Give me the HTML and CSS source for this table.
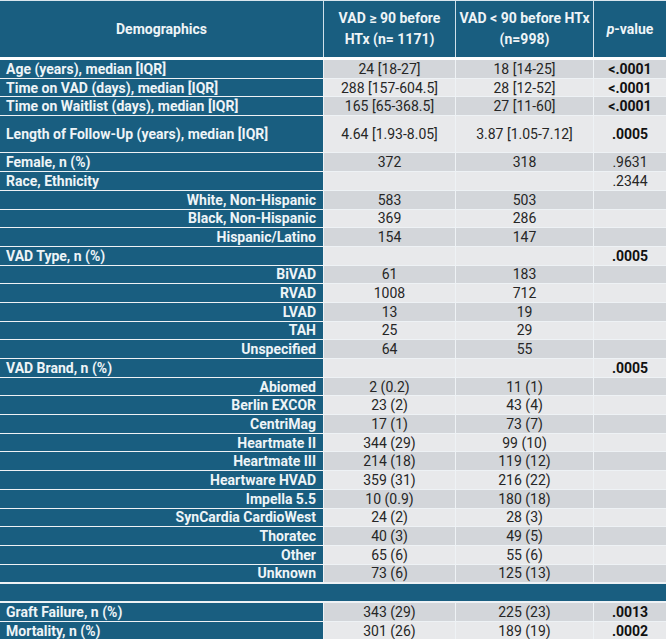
FILE: index.html
```html
<!DOCTYPE html>
<html>
<head>
<meta charset="utf-8">
<link rel="stylesheet" href="styles.css">
</head>
<body>
<div class="sheet">
  <div class="grid head">
    <div class="hc">Demographics</div>
    <div class="hc">VAD ≥ 90 before<br>HTx (n= 1171)</div>
    <div class="hc">VAD &lt; 90 before HTx<br>(n=998)</div>
    <div class="hc"><i>p</i>-value</div>
  </div>
  <div class="grid body">
    <div class="lab">Age (years), median [IQR]</div><div class="d g1">24 [18-27]</div><div class="d g1">18 [14-25]</div><div class="d g1 b">&lt;.0001</div>
    <div class="lab">Time on VAD (days), median [IQR]</div><div class="d g2">288 [157-604.5]</div><div class="d g2">28 [12-52]</div><div class="d g2 b">&lt;.0001</div>
    <div class="lab">Time on Waitlist (days), median [IQR]</div><div class="d g1">165 [65-368.5]</div><div class="d g1">27 [11-60]</div><div class="d g1 b">&lt;.0001</div>
    <div class="lab tall">Length of Follow-Up (years), median [IQR]</div><div class="d g2 tall">4.64 [1.93-8.05]</div><div class="d g2 tall">3.87 [1.05-7.12]</div><div class="d g2 b tall">.0005</div>
    <div class="lab">Female, n (%)</div><div class="d g1">372</div><div class="d g1">318</div><div class="d g1">.9631</div>
    <div class="lab">Race, Ethnicity</div><div class="d g2"></div><div class="d g2"></div><div class="d g2">.2344</div>
    <div class="lab sub">White, Non-Hispanic</div><div class="d g1">583</div><div class="d g1">503</div><div class="d g1"></div>
    <div class="lab sub">Black, Non-Hispanic</div><div class="d g2">369</div><div class="d g2">286</div><div class="d g2"></div>
    <div class="lab sub">Hispanic/Latino</div><div class="d g1">154</div><div class="d g1">147</div><div class="d g1"></div>
    <div class="lab">VAD Type, n (%)</div><div class="d g2"></div><div class="d g2"></div><div class="d g2 b">.0005</div>
    <div class="lab sub">BiVAD</div><div class="d g1">61</div><div class="d g1">183</div><div class="d g1"></div>
    <div class="lab sub">RVAD</div><div class="d g2">1008</div><div class="d g2">712</div><div class="d g2"></div>
    <div class="lab sub">LVAD</div><div class="d g1">13</div><div class="d g1">19</div><div class="d g1"></div>
    <div class="lab sub">TAH</div><div class="d g2">25</div><div class="d g2">29</div><div class="d g2"></div>
    <div class="lab sub">Unspecified</div><div class="d g1">64</div><div class="d g1">55</div><div class="d g1"></div>
    <div class="lab">VAD Brand, n (%)</div><div class="d g2"></div><div class="d g2"></div><div class="d g2 b">.0005</div>
    <div class="lab sub">Abiomed</div><div class="d g1">2 (0.2)</div><div class="d g1">11 (1)</div><div class="d g1"></div>
    <div class="lab sub">Berlin EXCOR</div><div class="d g2">23 (2)</div><div class="d g2">43 (4)</div><div class="d g2"></div>
    <div class="lab sub">CentriMag</div><div class="d g1">17 (1)</div><div class="d g1">73 (7)</div><div class="d g1"></div>
    <div class="lab sub">Heartmate II</div><div class="d g2">344 (29)</div><div class="d g2">99 (10)</div><div class="d g2"></div>
    <div class="lab sub">Heartmate III</div><div class="d g1">214 (18)</div><div class="d g1">119 (12)</div><div class="d g1"></div>
    <div class="lab sub">Heartware HVAD</div><div class="d g2">359 (31)</div><div class="d g2">216 (22)</div><div class="d g2"></div>
    <div class="lab sub">Impella 5.5</div><div class="d g1">10 (0.9)</div><div class="d g1">180 (18)</div><div class="d g1"></div>
    <div class="lab sub">SynCardia CardioWest</div><div class="d g2">24 (2)</div><div class="d g2">28 (3)</div><div class="d g2"></div>
    <div class="lab sub">Thoratec</div><div class="d g1">40 (3)</div><div class="d g1">49 (5)</div><div class="d g1"></div>
    <div class="lab sub">Other</div><div class="d g2">65 (6)</div><div class="d g2">55 (6)</div><div class="d g2"></div>
    <div class="lab sub">Unknown</div><div class="d g1">73 (6)</div><div class="d g1">125 (13)</div><div class="d g1"></div>
    <div class="blank"></div>
    <div class="lab">Graft Failure, n (%)</div><div class="d g1">343 (29)</div><div class="d g1">225 (23)</div><div class="d g1 b">.0013</div>
    <div class="lab">Mortality, n (%)</div><div class="d g2">301 (26)</div><div class="d g2">189 (19)</div><div class="d g2 b">.0002</div>
  </div>
</div>
</body>
</html>
```
FILE: styles.css
```css
html, body {
  margin: 0;
  padding: 0;
  background: #ffffff;
}
.sheet {
  width: 666px;
  font-family: Roboto, "Liberation Sans", sans-serif;
  font-size: 14px;
}
.grid {
  display: grid;
  grid-template-columns: 323px 131px 137px 72px;
  column-gap: 1px;
  row-gap: 1px;
  background: #eef2f5;
}
.head {
  background: #cfe0ea;
  border-top: 1px solid #d9e6ee;
}
.hc {
  background: #195e80;
  color: #eef4f7;
  font-weight: 700;
  height: 56px;
  display: flex;
  align-items: center;
  justify-content: center;
  text-align: center;
  line-height: 21px;
}
.body {
  margin-top: 3px;
}
.lab, .d {
  height: 17.7px;
  display: flex;
  align-items: center;
  white-space: nowrap;
}
.tall {
  height: 36.4px;
}
.lab {
  background: #195e80;
  color: #eef4f7;
  font-weight: 700;
  padding-left: 6px;
}
.lab.sub {
  justify-content: flex-end;
  padding-left: 0;
  padding-right: 7px;
}
.d {
  justify-content: center;
  color: #262626;
}
.g1 { background: #d3d6da; }
.g2 { background: #e8e9eb; }
.b { font-weight: 700; color: #111; }
.blank {
  grid-column: 1 / -1;
  height: 17px;
  margin: 1px 0;
  background: #195e80;
}
```
